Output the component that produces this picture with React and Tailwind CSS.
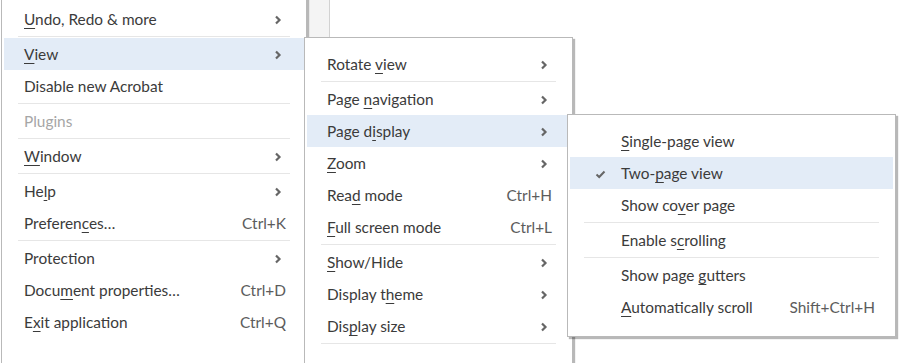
import React from 'react';

const SEP = 'sep';

const mainItems = [
  { text: 'Undo, Redo & more', u: 0, sub: true },
  SEP,
  { text: 'View', u: 0, sub: true, active: true },
  { text: 'Disable new Acrobat' },
  SEP,
  { text: 'Plugins', disabled: true },
  SEP,
  { text: 'Window', u: 0, sub: true },
  SEP,
  { text: 'Help', u: 2, sub: true },
  { text: 'Preferences…', u: 8, key: 'Ctrl+K' },
  SEP,
  { text: 'Protection', sub: true },
  { text: 'Document properties…', u: 4, key: 'Ctrl+D' },
  { text: 'Exit application', u: 1, key: 'Ctrl+Q' },
];

const viewItems = [
  { text: 'Rotate view', u: 7, sub: true },
  SEP,
  { text: 'Page navigation', u: 5, sub: true },
  { text: 'Page display', u: 6, sub: true, active: true },
  { text: 'Zoom', u: 0, sub: true },
  { text: 'Read mode', u: 3, key: 'Ctrl+H' },
  { text: 'Full screen mode', u: 0, key: 'Ctrl+L' },
  SEP,
  { text: 'Show/Hide', u: 0, sub: true },
  { text: 'Display theme', u: 9, sub: true },
  { text: 'Display size', u: 3, sub: true },
  SEP,
];

const displayItems = [
  { text: 'Single-page view', u: 0 },
  { text: 'Two-page view', u: 4, active: true, checked: true },
  { text: 'Show cover page', u: 7 },
  SEP,
  { text: 'Enable scrolling', u: 8 },
  SEP,
  { text: 'Show page gutters', u: 10 },
  { text: 'Automatically scroll', u: 0, key: 'Shift+Ctrl+H' },
];

function Label({ text, u }) {
  if (u === undefined) return text;
  return (
    <>
      {text.slice(0, u)}
      <u className="underline-offset-[3px] decoration-1">{text[u]}</u>
      {text.slice(u + 1)}
    </>
  );
}

function Chevron() {
  return (
    <svg width="8" height="10" viewBox="0 0 8 10" className="mr-[4px] -mt-[1px]">
      <path d="M2 1.5 L5.5 5 L2 8.5" fill="none" stroke="#666" strokeWidth="2.2" />
    </svg>
  );
}

function Check() {
  return (
    <svg width="11" height="9" viewBox="0 0 11 9">
      <path d="M1.5 4.5 L4.2 7 L9.5 1.5" fill="none" stroke="#666" strokeWidth="2" />
    </svg>
  );
}

function Row({ item, checkCol }) {
  return (
    <div
      className={`flex items-center h-[32px] pt-[2px] pr-[18px] ${checkCol ? 'pl-0' : 'pl-[20px]'} ${
        item.active ? 'bg-[#e3ecf7]' : ''
      } ${item.disabled ? 'text-[#a6a6a6]' : 'text-[#3b3b3b]'}`}
    >
      {checkCol && (
        <div className="w-[51px] flex justify-center pl-[9px]">{item.checked && <Check />}</div>
      )}
      <span className="flex-1 whitespace-nowrap">
        <Label text={item.text} u={item.u} />
      </span>
      {item.key && <span className="text-[#5c5c5c] whitespace-nowrap">{item.key}</span>}
      {item.sub && <Chevron />}
    </div>
  );
}

function Menu({ items, className, checkCol }) {
  return (
    <div
      className={`absolute bg-white border border-[#b9b9b9] px-[2px] pt-[10px] shadow-[2px_2px_1px_rgba(0,0,0,0.28)] ${className}`}
    >
      {items.map((item, i) =>
        item === SEP ? (
          <div key={i} className="h-px my-px mx-[14px] bg-[#e6e6e6]" />
        ) : (
          <Row key={i} item={item} checkCol={checkCol} />
        )
      )}
    </div>
  );
}

export default function App() {
  return (
    <div
      className="relative w-[908px] h-[363px] overflow-hidden bg-white text-[15.4px]"
      style={{ fontFamily: 'Lato, "Open Sans", sans-serif' }}
    >
      {/* app behind the menus */}
      <div className="flex h-full">
        <div className="w-[309px]" />
        <div className="w-[21px] bg-[#f4f4f4] border-r border-[#d2d2d2]" />
        <div className="flex-1" />
      </div>

      <Menu items={mainItems} className="left-[1px] top-[-8px] w-[306px] pb-[40px]" />
      <Menu items={viewItems} className="left-[304px] top-[37px] w-[269px] pb-[30px]" />
      <Menu items={displayItems} className="left-[567px] top-[114px] w-[329px] pb-[13px]" checkCol />
    </div>
  );
}
